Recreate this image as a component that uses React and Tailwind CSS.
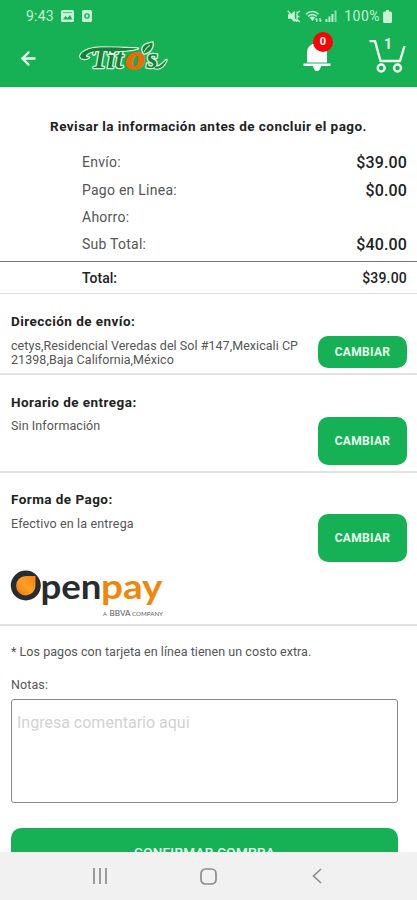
import { FiArrowLeft } from "react-icons/fi";

const CHARGES = [
  { label: "Envío:", amount: "$39.00", row: "h-7" },
  { label: "Pago en Linea:", amount: "$0.00", row: "h-7" },
  { label: "Ahorro:", amount: "", row: "h-[27px]" },
  { label: "Sub Total:", amount: "$40.00", row: "h-[26px]" },
];

function StatusBar() {
  return (
    <div className="flex h-8 items-center pl-[26px] pr-6 text-[14px] tracking-[0.2px] text-[#c5f3d3]">
      <span>9:43</span>
      <svg className="ml-[7px]" width="13" height="12" viewBox="0 0 13 12">
        <rect width="13" height="12" rx="1.5" fill="#c5f3d3" />
        <path d="M2 9.5 4.5 6l2 2L9 5l2.3 4.5z" fill="#16b154" />
        <path d="M2 2.5h9" stroke="#16b154" strokeWidth="0.7" />
      </svg>
      <svg className="ml-2" width="10" height="12" viewBox="0 0 10 12">
        <rect width="10" height="12" rx="1.5" fill="#c5f3d3" />
        <circle cx="5" cy="6" r="2.1" fill="none" stroke="#16b154" strokeWidth="1.4" />
      </svg>

      <svg className="ml-auto" width="14" height="13" viewBox="0 0 14 13" fill="#c5f3d3">
        <path d="M1 4.2h2.8L7.8.8v11.4L3.8 8.8H1z" />
        <path d="M.8.8l9 11" stroke="#c5f3d3" strokeWidth="1.4" />
        <path d="M10 3.2 12.8 1M10 6.5h2.4M10 9.5l2.8 2.5M10 1.5v10" stroke="#c5f3d3" strokeWidth="1.3" fill="none" />
      </svg>
      <svg className="ml-[4px]" width="17" height="13" viewBox="0 0 17 13" fill="none" stroke="#c5f3d3">
        <path d="M1 4.2c3.8-3.6 9-3.6 12.6 0M3 6.4c2.8-2.5 5.9-2.5 8.6 0" strokeWidth="1.5" />
        <path d="M4.6 7.6c1.8-1.4 3.8-1.4 5.5 0L7.4 11z" fill="#c5f3d3" stroke="none" />
        <path d="M11.8 12V8.5m-1.3 1.3 1.3-1.3M15 8v3.5m1.2-1.2L15 11.500" strokeWidth="1.3" />
      </svg>
      <svg className="ml-[3px]" width="13" height="12" viewBox="0 0 13 12" fill="#c5f3d3">
        <rect x="0.5" y="9" width="1.9" height="3" />
        <rect x="3.5" y="6.5" width="1.9" height="5.5" />
        <rect x="6.5" y="4" width="1.9" height="8" />
        <rect x="9.6" y="0.5" width="1.9" height="11.5" opacity="0.7" />
      </svg>
      <span className="ml-[6px] tracking-[0.5px]">100%</span>
      <svg className="ml-[3px] mr-px" width="9" height="13" viewBox="0 0 9 13">
        <path d="M3 0h3v1.5h1.500Q9 1.500 9 3v8.500Q9 13 7.500 13h-6Q0 13 0 11.500V3q0-1.500 1.500-1.500H3z" fill="#c5f3d3" />
      </svg>
    </div>
  );
}

function TitosLogo() {
  const swoosh =
    "M23 6.500C14 6.500 4 10 2.500 14.500C1.500 18.500 8 18.500 11 16.500C8.500 16.500 6.500 15.500 9 13C13 9.500 20 9.500 28 10C38 10.500 50 10 60 7.500C48 7 36 6.500 23 6.500Z";
  const leaf = "M65 11C63 6 66 3 74.500 1.500C75.500 7 71 12 66 12.500Z";
  const tail = "M78 25.500C82 26.500 85 22 88.500 19C86 25.500 82 28.500 76 27Z";
  return (
    <svg className="ml-[39px] overflow-visible" width="94" height="34" viewBox="0 0 94 34">
      <g
        fill="#15803d" stroke="#dff5d9" strokeWidth="2.6" strokeLinejoin="round" paintOrder="stroke"
        fontFamily="Liberation Serif, serif" fontStyle="italic" fontWeight="700"
      >
        <path d={swoosh} />
        <path d={leaf} />
        <path d={tail} />
        <text x="13" y="27" fontSize="29">T</text>
        <text x="29" y="27" fontSize="28" letterSpacing="0.5">it</text>
        <text x="68.5" y="27" fontSize="29">s</text>
      </g>
      <path d={swoosh} fill="#15803d" />
      <path d={tail} fill="#15803d" />
      <path d="M66 11Q68 7 72 4" fill="none" stroke="#a7df91" strokeWidth="1.2" />
      <text
        transform="translate(48 28) scale(1.15 1)" fontSize="33" fontFamily="Liberation Serif, serif"
        fontStyle="italic" fontWeight="700" fill="#e66b0b" stroke="#e66b0b" strokeWidth="1.8"
      >
        o
      </text>
    </svg>
  );
}

function Header() {
  return (
    <header className="h-[87px] shrink-0 bg-[#16b154]">
      <StatusBar />
      <div className="flex h-[52px] items-center pl-[18px]">
        <FiArrowLeft size={21} strokeWidth={2.6} className="text-[#e9fff0]" />
        <TitosLogo />
        <div className="relative ml-auto mr-[38px] h-[36px] w-[28px]">
          <svg width="28" height="36" viewBox="0 0 28 36" fill="#fff">
            <path d="M4 22.500V13Q4 3.500 14 3.500T24 13v9.500z" />
            <path d="M.5 23.500h27V26H.5zM10 26h8q-1 5-4 5t-4-5z" />
          </svg>
          <span className="absolute -top-[8px] left-[10px] flex size-[20px] items-center justify-center rounded-full bg-[#fb0207] text-[11px] font-bold text-white">
            0
          </span>
        </div>
        <div className="relative mr-[10px] h-[36px] w-[38px]">
          <svg width="38" height="36" viewBox="0 0 38 36" fill="none" stroke="#effff4" strokeWidth="2.4">
            <path d="M.5 1H6l5.500 20h19.500l4.500-15" strokeLinejoin="round" />
            <circle cx="12.2" cy="28" r="3.500" />
            <circle cx="28.5" cy="28" r="3.500" />
          </svg>
          <span className="absolute left-[15px] -top-[4px] text-[14px] font-bold leading-4 text-[#effff4]">1</span>
        </div>
      </div>
    </header>
  );
}

function ChangeButton({ className }) {
  return (
    <button
      className={`w-[89px] shrink-0 rounded-[10px] bg-[#16b154] text-[12px] font-bold tracking-[0.3px] text-[#e6ffef] ${className}`}
    >
      CAMBIAR
    </button>
  );
}

function OpenpayLogo() {
  return (
    <svg className="overflow-visible" width="154" height="50" viewBox="0 0 154 50" fontFamily="Lato, sans-serif">
      <defs>
        <linearGradient id="drop" x1="1" y1="0" x2="0" y2="1">
          <stop offset="0" stopColor="#f77f1a" />
          <stop offset="0.5" stopColor="#fba026" />
          <stop offset="1" stopColor="#ef7410" />
        </linearGradient>
      </defs>
      <circle cx="14.8" cy="15.5" r="15" fill="#292c2e" />
      <path d="M24.500 6V15.300A9.700 9.700 0 1 1 15 6Z" fill="url(#drop)" />
      <text x="29.5" y="28.5" fontSize="35" fontWeight="700" fill="#292c2e" textLength="61" lengthAdjust="spacingAndGlyphs">pen</text>
      <text x="90" y="28.5" fontSize="35" fontWeight="700" fill="#ef870c" textLength="61.5" lengthAdjust="spacingAndGlyphs">pay</text>
      <g fill="#5c5c5c">
        <text x="92" y="45.5" fontSize="5.5">A</text>
        <text x="98.5" y="45.5" fontSize="7.5" textLength="21" lengthAdjust="spacingAndGlyphs">BBVA</text>
        <text x="121" y="45.5" fontSize="5.5" textLength="31" lengthAdjust="spacingAndGlyphs">COMPANY</text>
      </g>
    </svg>
  );
}

export default function App() {
  return (
    <div className="flex h-[900px] w-[417px] flex-col overflow-hidden bg-white font-[Roboto,sans-serif] text-[#555]">
      <Header />

      <main className="min-h-0 flex-1 overflow-hidden">
        {/* Order summary */}
        <section>
          <h1 className="pt-[29px] text-center text-[13.5px] font-bold leading-5 tracking-[0.44px] text-[#222]">
            Revisar la información antes de concluir el pago.
          </h1>
          <div className="mt-[12px] pb-[4px] pl-[82px] pr-[10px]">
            {CHARGES.map((c) => (
              <div key={c.label} className={`flex items-center justify-between ${c.row}`}>
                <span className="text-[14px] tracking-[0.25px]">{c.label}</span>
                <span className="pt-[2px] text-[16px] font-medium tracking-[0.15px] text-[#222]">{c.amount}</span>
              </div>
            ))}
          </div>
          <div className="flex h-[33px] items-center justify-between border-y border-b-[#ddd] border-t-[#777] pl-[82px] pr-[10px] pt-px text-[14px] font-medium text-[#222]">
            <span>Total:</span>
            <span className="tracking-[0.2px]">$39.00</span>
          </div>
        </section>

        {/* Shipping address */}
        <section className="flex h-[81px] justify-between border-b-2 border-[#e2e2e2] pl-[11px] pr-[10px]">
          <div className="pt-[17px]">
            <h2 className="text-[13.5px] font-bold leading-5 tracking-[0.45px] text-[#222]">Dirección de envío:</h2>
            <p className="mt-[8px] whitespace-nowrap text-[12.5px] leading-[14px] tracking-[0.05px]">
              cetys,Residencial Veredas del Sol #147,Mexicali CP
              <br />
              21398,Baja California,México
            </p>
          </div>
          <ChangeButton className="mt-[42px] h-8" />
        </section>

        {/* Delivery time */}
        <section className="flex h-[98px] justify-between border-b-2 border-[#e2e2e2] pl-[11px] pr-[10px]">
          <div className="pt-[17px]">
            <h2 className="text-[13.5px] font-bold leading-5 tracking-[0.45px] text-[#222]">Horario de entrega:</h2>
            <p className="mt-[7px] text-[12.5px] leading-[14px] tracking-[0.1px]">Sin Información</p>
          </div>
          <ChangeButton className="mt-[42px] h-12" />
        </section>

        {/* Payment method */}
        <section className="h-[153px] border-b-2 border-[#e2e2e2] pl-[11px] pr-[10px]">
          <div className="flex justify-between">
            <div className="pt-[16px]">
              <h2 className="text-[13.5px] font-bold leading-5 tracking-[0.45px] text-[#222]">Forma de Pago:</h2>
              <p className="mt-[8px] text-[12.5px] leading-[14px] tracking-[0.15px]">Efectivo en la entrega</p>
            </div>
            <ChangeButton className="mt-[41px] h-12" />
          </div>
          <div className="mt-[8px]">
            <OpenpayLogo />
          </div>
        </section>

        {/* Notes */}
        <section className="pl-[11px] pr-[19px] text-[12.5px]">
          <p className="pt-[16px] leading-5 tracking-[0.05px]">* Los pagos con tarjeta en línea tienen un costo extra.</p>
          <label className="mt-[13px] block leading-5 tracking-[0.1px]" htmlFor="notas">Notas:</label>
          <textarea
            id="notas"
            className="mt-[4px] block h-[104px] w-full resize-none rounded-[3px] border border-[#888] px-[5px] pt-[11px] text-[16px] leading-6 placeholder:text-[#d2d2d2]"
            placeholder="Ingresa comentario aqui"
          />
          <button className="mt-[25px] h-[48px] w-full rounded-[10px] bg-[#16b154] text-[13.5px] font-medium tracking-[0.3px] text-[#e6ffef]">
            CONFIRMAR COMPRA
          </button>
        </section>
      </main>

      {/* System navigation */}
      <nav className="h-12 shrink-0 bg-[#f1f1f1]">
        <div className="flex h-full items-center pl-[92px]">
          <svg width="16" height="16" viewBox="0 0 16 16" stroke="#8c8c8c" strokeWidth="1.7">
            <path d="M2 0v16M8 0v16M14 0v16" />
          </svg>
          <svg className="ml-[92px]" width="17" height="17" viewBox="0 0 17 17" fill="none" stroke="#8c8c8c" strokeWidth="1.7">
            <rect x="1" y="1" width="15" height="15" rx="4.5" />
          </svg>
          <svg className="ml-[95px]" width="10" height="16" viewBox="0 0 10 16" fill="none" stroke="#8c8c8c" strokeWidth="1.7">
            <path d="M9 1 1.500 8 9 15" />
          </svg>
        </div>
      </nav>
    </div>
  );
}
